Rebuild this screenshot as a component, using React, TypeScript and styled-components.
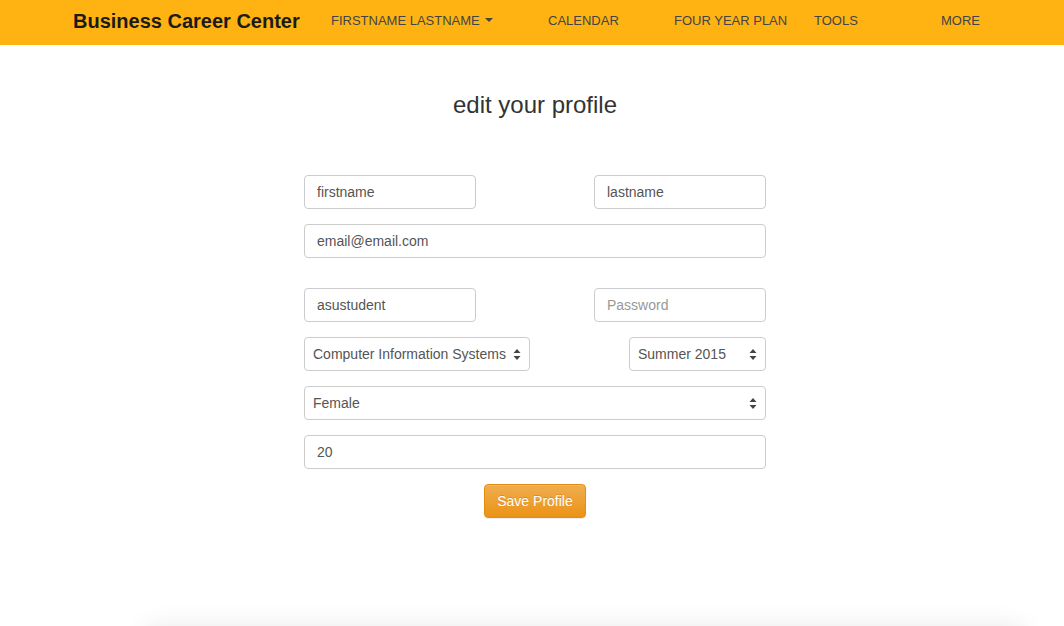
import React from "react";
import styled, { createGlobalStyle } from "styled-components";

const Global = createGlobalStyle`
  html, body { margin: 0; padding: 0; background: #fff; }
  body { font-family: "Liberation Sans", Arial, sans-serif; color: #333; }
  * { box-sizing: border-box; }
`;

const Page = styled.div`
  height: 626px;
  overflow: hidden;
  display: flex;
  flex-direction: column;
`;

const NavBar = styled.header`
  height: 45px;
  background: #ffb313;
  display: flex;
  align-items: center;
  padding-left: 73px;
`;

const Brand = styled.div`
  font-size: 20px;
  font-weight: 700;
  color: #1b1b1b;
  width: 258px;
  white-space: nowrap;
  margin-top: -2px;
`;

const NavItem = styled.div<{ $w?: number }>`
  width: ${(p) => (p.$w ? `${p.$w}px` : "auto")};
  flex-shrink: 0;
  font-size: 13px;
  color: #444;
  text-transform: uppercase;
  white-space: nowrap;
  display: flex;
  align-items: center;
  margin-top: -5px;
`;

const Caret = styled.span`
  display: inline-block;
  width: 0;
  height: 0;
  margin-left: 5px;
  border-top: 4px solid #444;
  border-left: 4px solid transparent;
  border-right: 4px solid transparent;
`;

const Main = styled.main`
  flex: 1;
  display: flex;
  flex-direction: column;
  align-items: center;
  padding-left: 6px;
`;

const Title = styled.h2`
  margin: 47px 0 0;
  font-size: 24px;
  font-weight: 400;
  color: #333;
  line-height: 26px;
`;

const Form = styled.form`
  width: 462px;
  margin-top: 57px;
  display: flex;
  flex-direction: column;
  gap: 15px;
`;

const Row = styled.div<{ $gapTop?: number }>`
  display: flex;
  justify-content: space-between;
  margin-top: ${(p) => p.$gapTop ?? 0}px;
`;

const Input = styled.input<{ $w?: number }>`
  width: ${(p) => (p.$w ? `${p.$w}px` : "100%")};
  height: 34px;
  padding: 6px 12px;
  border: 1px solid #ccc;
  border-radius: 4px;
  font-family: "Liberation Sans", Arial, sans-serif;
  font-size: 14px;
  color: #555;
  background: #fff;
  outline: none;
  &::placeholder { color: #999; }
`;

const SelectWrap = styled.div<{ $w?: number }>`
  position: relative;
  width: ${(p) => (p.$w ? `${p.$w}px` : "100%")};
`;

const Select = styled.select`
  width: 100%;
  height: 34px;
  padding: 6px 22px 6px 8px;
  border: 1px solid #ccc;
  border-radius: 4px;
  font-family: "Liberation Sans", Arial, sans-serif;
  font-size: 14px;
  color: #555;
  background: #fff;
  appearance: none;
  -webkit-appearance: none;
  outline: none;
`;

const Arrows = styled.svg`
  position: absolute;
  right: 9px;
  top: 12px;
  pointer-events: none;
`;

const ButtonRow = styled.div`
  display: flex;
  justify-content: center;
`;

const SaveButton = styled.button`
  width: 102px;
  height: 34px;
  border: 1px solid #e38d13;
  border-radius: 4px;
  background: linear-gradient(#f0ad4e, #eb9316);
  color: #fff;
  font-family: "Liberation Sans", Arial, sans-serif;
  font-size: 14px;
  box-shadow: inset 0 1px 0 rgba(255, 255, 255, 0.15), 0 1px 1px rgba(0, 0, 0, 0.075);
  text-shadow: 0 -1px 0 rgba(0, 0, 0, 0.15);
`;

const Footer = styled.footer`
  align-self: stretch;
  margin-top: auto;
  margin-left: 140px;
  margin-right: 40px;
  height: 40px;
  transform: translateY(41px);
  background: #fff;
  box-shadow: 0 0 26px rgba(0, 0, 0, 0.09);
`;

const ArrowIcon = () => (
  <Arrows width="8" height="11" viewBox="0 0 8 11">
    <path d="M4 0 L7.5 4 L0.5 4 Z" fill="#444" />
    <path d="M4 11 L7.5 7 L0.5 7 Z" fill="#444" />
  </Arrows>
);

export default function App() {
  return (
    <Page>
      <Global />
      <NavBar>
        <Brand>Business Career Center</Brand>
        <NavItem $w={217}>
          Firstname Lastname
          <Caret />
        </NavItem>
        <NavItem $w={126}>Calendar</NavItem>
        <NavItem $w={140}>Four Year Plan</NavItem>
        <NavItem $w={127}>Tools</NavItem>
        <NavItem>More</NavItem>
      </NavBar>
      <Main>
        <Title>edit your profile</Title>
        <Form onSubmit={(e) => e.preventDefault()}>
          <Row>
            <Input $w={172} defaultValue="firstname" />
            <Input $w={172} defaultValue="lastname" />
          </Row>
          <Input defaultValue="email@email.com" />
          <Row $gapTop={15}>
            <Input $w={172} defaultValue="asustudent" />
            <Input $w={172} type="password" placeholder="Password" />
          </Row>
          <Row>
            <SelectWrap $w={226}>
              <Select defaultValue="cis">
                <option value="cis">Computer Information Systems</option>
              </Select>
              <ArrowIcon />
            </SelectWrap>
            <SelectWrap $w={137}>
              <Select defaultValue="s15">
                <option value="s15">Summer 2015</option>
              </Select>
              <ArrowIcon />
            </SelectWrap>
          </Row>
          <SelectWrap>
            <Select defaultValue="f">
              <option value="f">Female</option>
            </Select>
            <ArrowIcon />
          </SelectWrap>
          <Input defaultValue="20" />
          <ButtonRow>
            <SaveButton type="submit">Save Profile</SaveButton>
          </ButtonRow>
        </Form>
        <Footer />
      </Main>
    </Page>
  );
}
